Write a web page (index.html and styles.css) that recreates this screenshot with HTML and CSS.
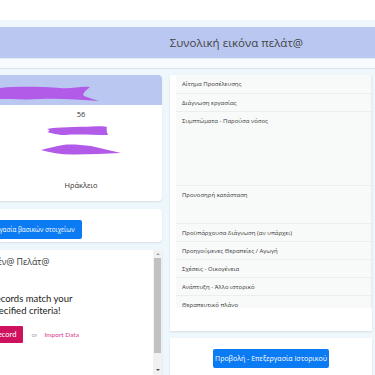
FILE: index.html
```html
<!DOCTYPE html>
<html lang="el">
<head>
    <meta charset="UTF-8" />
    <meta name="viewport" content="width=device-width, initial-scale=1.0" />
    <title>Συνολική εικόνα πελάτ@</title>
    <link rel="stylesheet" href="styles.css">
</head>
<body>
<div class="top-gap"></div>

<header class="page-head">
    <div class="title-bar">
        <h1>Συνολική εικόνα πελάτ@</h1>
    </div>
    <div class="sub-band"></div>
</header>

<main class="layout">
    <section class="col-left">
        <div class="card profile">
            <div class="profile-head">
                <svg class="mark mark-name" width="100" height="17" viewBox="0 0 100 17">
                    <path d="M0 3 C20 1 45 2 60 3 C72 4 80 1 90 2 C85 6 82 9 84 11 C90 13 95 15 99 16 C80 15 60 13 40 14 C25 15 10 14 0 14 Z" />
                </svg>
            </div>
            <div class="profile-body">
                <div class="age">56</div>
                <svg class="mark" width="62" height="10" viewBox="0 0 62 10">
                    <path d="M0 3 C10 1 30 1 45 0.5 C52 0 58 0 60 1 C59 4 60 6 61 9 C45 9 30 8 18 9 C10 9 5 7 0 6 C3 5 3 4 0 3 Z" />
                </svg>
                <svg class="mark" width="80" height="11" viewBox="0 0 80 11">
                    <path d="M0 6 C8 4 15 2 22 1 C30 0 40 1 50 2 C60 4 70 7 80 9 C65 10 50 10 35 10.5 C22 11 10 9 0 6 Z" />
                </svg>
                <div class="city">Ηράκλειο</div>
            </div>
        </div>

        <div class="card action-card">
            <button class="btn btn-blue btn-basic">Επεξεργασία βασικών στοιχείων</button>
        </div>

        <div class="card frame-card">
            <div class="frame">
                <div class="frame-inner">
                    <h2>Επιλεγμέν@ Πελάτ@</h2>
                    <p class="empty">No records match your<br>specified criteria!</p>
                    <div class="empty-actions">
                        <a class="btn-pink">Add Record</a>
                        <span class="or">or</span>
                        <a class="import">Import Data</a>
                    </div>
                </div>
            </div>
            <div class="scrollbar">
                <span class="arrow arrow-up"></span>
                <span class="thumb"></span>
                <span class="arrow arrow-down"></span>
            </div>
        </div>
    </section>

    <section class="col-right">
        <div class="card history">
            <div class="history-table">
                <div class="row">Αίτημα Προσέλευσης</div>
                <div class="row">Διάγνωση εργασίας</div>
                <div class="row row-xl">Συμπτώματα - Παρούσα νόσος</div>
                <div class="row row-lg">Προνοσηρή κατάσταση</div>
                <div class="row">Προϋπάρχουσα διάγνωση (αν υπάρχει)</div>
                <div class="row">Προηγούμενες Θεραπείες / Αγωγή</div>
                <div class="row">Σχέσεις - Οικογένεια</div>
                <div class="row">Ανάπτυξη - Άλλο ιστορικό</div>
                <div class="row">Θεραπευτικό πλάνο</div>
            </div>
        </div>

        <div class="card history-action">
            <button class="btn btn-blue">Προβολή - Επεξεργασία Ιστορικού</button>
        </div>
    </section>
</main>
</body>
</html>
```

FILE: styles.css
```css
:root {
    --bg-color: #eef7fc;
    --lavender: #bac7f1;
    --blue: #0a7bf2;
    --pink: #cf1260;
    --text-color: #333;
    --table-bg: #f8f9f9;
    --table-line: #eceeee;
}

* {
    box-sizing: border-box;
    margin: 0;
    padding: 0;
}

body {
    height: 375px;
    overflow: hidden;
    font-family: 'Lato', 'Open Sans', sans-serif;
    background-color: var(--bg-color);
    color: var(--text-color);
}

.top-gap {
    height: 20px;
    background: #fff;
}

.page-head {
    padding-top: 7px;
}

.title-bar {
    height: 31px;
    background: var(--lavender);
    display: flex;
    align-items: center;
    justify-content: center;
    padding-left: 98px;
}

h1 {
    font-family: 'Open Sans', sans-serif;
    font-weight: normal;
    font-size: 11.5px;
    color: #444;
}

.sub-band {
    height: 11px;
    background: #f8fbfe;
    border-top: 1px solid #e4edf5;
    border-bottom: 1px solid #dde2e8;
}

.layout {
    display: grid;
    grid-template-columns: 162px 202px;
    column-gap: 8px;
    padding-top: 6px;
}

.card {
    background: #fff;
    box-shadow: 0 1px 2px rgba(0, 0, 0, 0.1);
}

.col-left {
    display: flex;
    flex-direction: column;
    gap: 8px;
}

.profile {
    height: 126px;
    border-radius: 0 4px 4px 0;
    overflow: hidden;
}

.profile-head {
    height: 30px;
    background: var(--lavender);
    padding-top: 10px;
}

.mark {
    display: block;
    fill: #b25be8;
}

.profile-body {
    display: flex;
    flex-direction: column;
    align-items: center;
    font-family: 'Open Sans', sans-serif;
    font-size: 7.5px;
}

.age {
    line-height: 10px;
    margin-top: 4px;
}

.age + .mark {
    margin-top: 7px;
    margin-right: 6px;
}

.age + .mark + .mark {
    margin-top: 8px;
}

.city {
    margin-top: 25px;
    line-height: 10px;
}

.action-card {
    height: 33px;
    padding-top: 7px;
    border-radius: 0 4px 4px 0;
    overflow: hidden;
}

.btn {
    border: none;
    border-radius: 2px;
    color: #fff;
    font-family: 'Open Sans', sans-serif;
    font-size: 7px;
    white-space: nowrap;
    cursor: pointer;
}

.btn-blue {
    background: var(--blue);
    height: 19px;
    padding: 0 8px;
}

.btn-basic {
    font-size: 6.3px;
    margin-left: -28px;
    padding: 0 7px;
}

.frame-card {
    height: 130px;
    display: flex;
    overflow: hidden;
}

.frame {
    flex: 1;
    overflow: hidden;
}

.frame-inner {
    width: 246px;
    margin-left: -98px;
    padding-top: 5px;
    text-align: center;
}

.frame-inner h2 {
    font-family: 'Open Sans', sans-serif;
    font-weight: normal;
    font-size: 8.8px;
    line-height: 14px;
    text-align: left;
    padding-left: 63px;
}

.empty {
    margin-top: 24px;
    font-size: 9.5px;
    line-height: 12px;
    color: #222;
}

.empty-actions {
    display: flex;
    justify-content: center;
    align-items: center;
    margin-top: 9px;
    font-size: 6.5px;
}

.btn-pink {
    background: var(--pink);
    color: #fff;
    font-size: 7.5px;
    line-height: 17px;
    padding: 0 7px;
    border-radius: 1px;
}

.or {
    color: #aaa;
    margin: 0 7px 0 8px;
}

.import {
    color: #d4368a;
}

.scrollbar {
    width: 9px;
    background: #f1f1f1;
    display: flex;
    flex-direction: column;
    align-items: center;
}

.arrow {
    width: 0;
    height: 0;
    border-left: 2px solid transparent;
    border-right: 2px solid transparent;
}

.arrow-up {
    margin: 3px 0;
    border-bottom: 2px solid #a3a3a3;
}

.arrow-down {
    margin-top: 16px;
    border-top: 2px solid #505050;
}

.thumb {
    width: 7px;
    height: 95px;
    background: #c1c1c1;
}

.col-right {
    display: flex;
    flex-direction: column;
    gap: 7px;
}

.history {
    height: 256px;
    padding: 0 0 23px 6px;
}

.history-table {
    height: 233px;
    overflow: hidden;
    background: var(--table-bg);
    border-right: 1px solid var(--table-line);
}

.row {
    height: 18px;
    padding: 5px 6px 0;
    font-family: 'Open Sans', sans-serif;
    font-size: 6px;
    line-height: 8px;
    color: #3a3a3a;
    border-bottom: 1px solid var(--table-line);
}

.row:first-child {
    height: 19px;
}

.row-xl {
    height: 74px;
}

.row-lg {
    height: 38px;
}

.history-action {
    height: 40px;
    padding-top: 11px;
    display: flex;
    justify-content: center;
    align-items: flex-start;
}

.history-action .btn {
    width: 116px;
    padding: 0;
}
```
